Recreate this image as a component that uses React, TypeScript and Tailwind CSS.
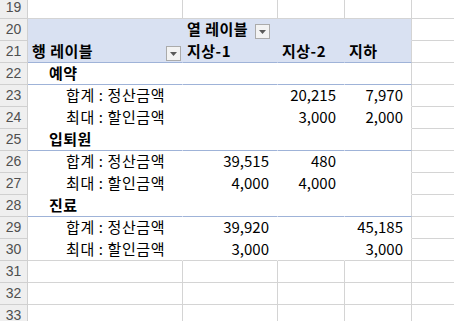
import React from "react";

type Cell = { text?: string; kind?: "head" | "group" | "item" | "num" };
type Row = {
  n: number;
  pivot?: boolean;
  fill?: boolean;
  line?: "blue" | "grid" | "none";
  cells: (Cell | null)[];
  filterA?: boolean;
  filterB?: boolean;
};

const rows: Row[] = [
  { n: 19, cells: [] },
  { n: 20, pivot: true, fill: true, line: "none", cells: [null, { text: "열 레이블", kind: "head" }], filterB: true },
  {
    n: 21,
    pivot: true,
    fill: true,
    line: "blue",
    filterA: true,
    cells: [
      { text: "행 레이블", kind: "head" },
      { text: "지상-1", kind: "head" },
      { text: "지상-2", kind: "head" },
      { text: "지하", kind: "head" },
    ],
  },
  { n: 22, pivot: true, line: "blue", cells: [{ text: "예약", kind: "group" }] },
  { n: 23, pivot: true, line: "none", cells: [{ text: "합계 : 정산금액", kind: "item" }, null, { text: "20,215", kind: "num" }, { text: "7,970", kind: "num" }] },
  { n: 24, pivot: true, line: "none", cells: [{ text: "최대 : 할인금액", kind: "item" }, null, { text: "3,000", kind: "num" }, { text: "2,000", kind: "num" }] },
  { n: 25, pivot: true, line: "blue", cells: [{ text: "입퇴원", kind: "group" }] },
  { n: 26, pivot: true, line: "none", cells: [{ text: "합계 : 정산금액", kind: "item" }, { text: "39,515", kind: "num" }, { text: "480", kind: "num" }, null] },
  { n: 27, pivot: true, line: "none", cells: [{ text: "최대 : 할인금액", kind: "item" }, { text: "4,000", kind: "num" }, { text: "4,000", kind: "num" }, null] },
  { n: 28, pivot: true, line: "blue", cells: [{ text: "진료", kind: "group" }] },
  { n: 29, pivot: true, line: "none", cells: [{ text: "합계 : 정산금액", kind: "item" }, { text: "39,920", kind: "num" }, null, { text: "45,185", kind: "num" }] },
  { n: 30, pivot: true, line: "grid", cells: [{ text: "최대 : 할인금액", kind: "item" }, { text: "3,000", kind: "num" }, null, { text: "3,000", kind: "num" }] },
  { n: 31, cells: [] },
  { n: 32, cells: [] },
  { n: 33, cells: [] },
];

// column widths include the 1px right gridline
const widths = ["w-[155px]", "w-[95px]", "w-[67px]", "w-[67px]"];

const FilterButton = () => (
  <span className="flex h-[15px] w-[15px] items-center justify-center border border-[#ababab] bg-[#f3f3f3]">
    <svg width="7" height="4" viewBox="0 0 7 4">
      <path d="M0 0 H7 L3.5 4 Z" fill="#5a5a5a" />
    </svg>
  </span>
);

const CellText = ({ cell }: { cell: Cell | null }) => {
  if (!cell || !cell.text) return null;
  if (cell.kind === "num") return <span className="ml-auto pr-[8px]">{cell.text}</span>;
  if (cell.kind === "group") return <span className="pl-[21px] font-bold tracking-[0.4px]">{cell.text}</span>;
  if (cell.kind === "item") return <span className="pl-[38px] tracking-[0.6px]">{cell.text}</span>;
  return <span className="pl-[4px] font-bold tracking-[0.5px]">{cell.text}</span>;
};

export default function App() {
  return (
    <div
      className="-mt-[3px] h-[324px] w-[454px] overflow-hidden bg-white text-[15px] text-black"
      style={{ fontFamily: '"Noto Sans CJK KR", "Noto Sans", sans-serif' }}
    >
      {rows.map((row) => {
        const bottom = !row.pivot || row.line === "grid"
          ? "border-b-[#d4d4d4]"
          : row.line === "blue"
          ? "border-b-[#9fb3d8]"
          : row.fill
          ? "border-b-[#d9e1f2]"
          : "border-b-white";
        return (
          <div key={row.n} className="flex h-[22px]">
            <div
              className="flex w-[28px] shrink-0 items-center justify-center border-b border-r border-[#d0d0d0] bg-[#efefef] text-[14px] text-[#505050]"
              style={{ fontFamily: '"Liberation Sans", sans-serif' }}
            >
              {row.n}
            </div>
            {widths.map((w, i) => (
              <div
                key={i}
                className={`flex ${w} shrink-0 items-center whitespace-nowrap border-b border-r ${bottom} ${
                  row.fill ? "bg-[#d9e1f2]" : "bg-white"
                } ${row.pivot && i < 3 ? "border-r-transparent" : "border-r-[#d4d4d4]"}`}
              >
                <CellText cell={row.cells[i] ?? null} />
                {i === 0 && row.filterA && (
                  <span className="mb-[1px] ml-auto mr-[1px] mt-auto">
                    <FilterButton />
                  </span>
                )}
                {i === 1 && row.filterB && (
                  <span className="mb-[1px] ml-[7px] mt-auto">
                    <FilterButton />
                  </span>
                )}
              </div>
            ))}
            <div className="flex-1 border-b border-[#d4d4d4]" />
          </div>
        );
      })}
    </div>
  );
}
